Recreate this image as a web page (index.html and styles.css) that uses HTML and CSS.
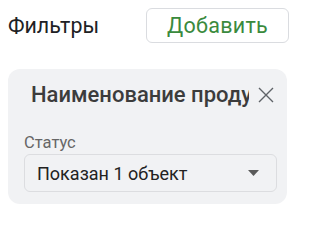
FILE: index.html
```html
<!DOCTYPE html>
<html lang="ru">
<head>
<meta charset="utf-8">
<link rel="stylesheet" href="styles.css">
</head>
<body>
<div class="page">
  <div class="header">
    <div class="heading">Фильтры</div>
    <button class="add-btn">Добавить</button>
  </div>
  <div class="panel">
    <div class="panel-head">
      <div class="panel-title">Наименование продукта</div>
      <svg class="close" width="16" height="16" viewBox="0 0 16 16"><path d="M1 1L15 15M15 1L1 15" stroke="#5f6368" stroke-width="1.4" fill="none"/></svg>
    </div>
    <div class="field">
      <div class="label">Статус</div>
      <div class="select">
        <span class="select-text">Показан 1 объект</span>
        <svg class="arrow" width="11" height="6" viewBox="0 0 11 6"><path d="M0 0H11L5.5 6Z" fill="#5a5a5a"/></svg>
      </div>
    </div>
  </div>
</div>
</body>
</html>
```
FILE: styles.css
```css
* { box-sizing: border-box; }
html, body { margin: 0; padding: 0; background: #fff; }
body { font-family: Roboto, "Noto Sans", sans-serif; color: #202124; }
.page { padding: 8px 0 0 8px; width: 289px; }
.header { display: flex; justify-content: space-between; align-items: center; height: 35px; }
.heading { font-size: 21.4px; color: #202124; }
.add-btn {
  width: 143px; height: 35px;
  border: 1px solid #dadce0; border-radius: 6px; background: #fff;
  color: #3a8a3d; font-family: Roboto, sans-serif; font-size: 21.5px; font-weight: 400;
  padding: 0; letter-spacing: 0.3px;
}
.panel {
  margin-top: 26px; width: 279px; height: 135px;
  background: #f1f2f4; border-radius: 12px;
  padding: 14px 10px 0 16px;
}
.panel-head { display: flex; align-items: center; }
.panel-title {
  width: 218px; margin-left: 7px; overflow: hidden; white-space: nowrap; text-overflow: clip;
  font-size: 22px; font-weight: 500; color: #3c3c3c; line-height: 24px;
}
.close { margin-left: 9px; }
.field { margin-top: 27px; }
.label { font-size: 16.5px; color: #666; line-height: 18px; }
.select {
  margin-top: 2px; height: 38px; border: 1px solid #dcdde0; border-radius: 6px;
  display: flex; align-items: center; justify-content: space-between;
  padding: 0 17px 0 12px;
}
.select-text { font-size: 18px; color: #222; }
```
